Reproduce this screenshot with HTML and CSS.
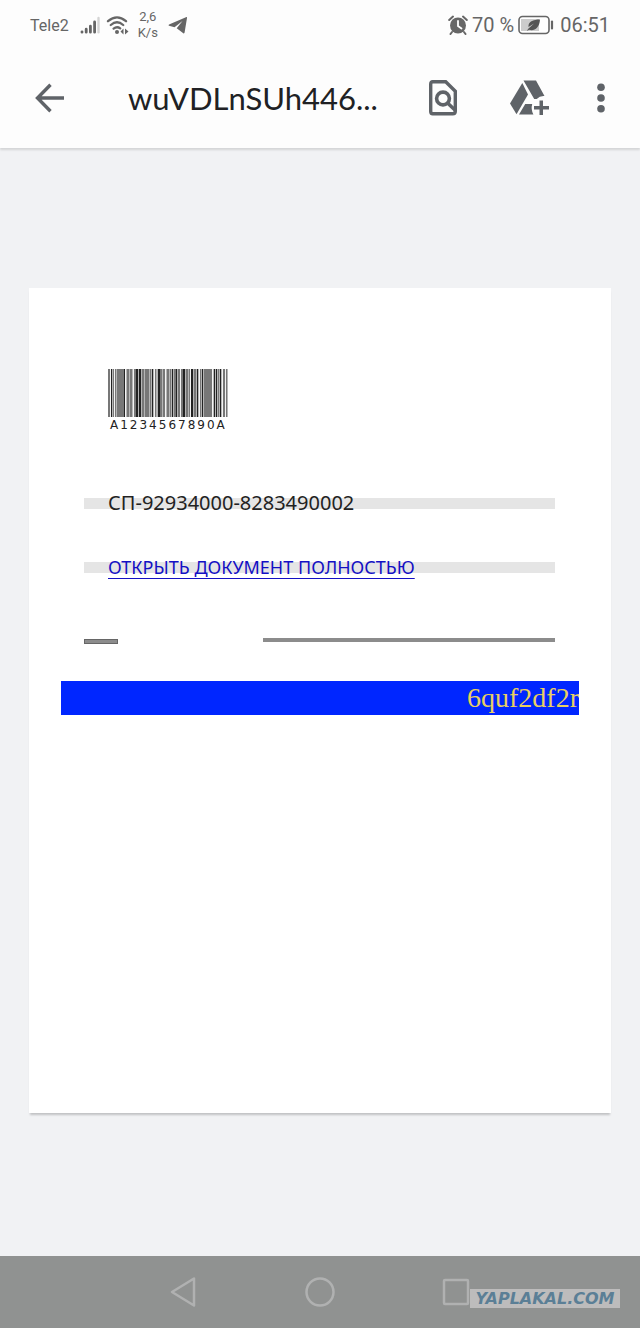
FILE: index.html
```html
<!DOCTYPE html>
<html lang="ru">
  <head>
    <title>wuVDLnSUh446</title>
    <meta charset="UTF-8" />
    <meta name="viewport" content="width=device-width, initial-scale=1" />
    <link rel="stylesheet" href="styles.css">
  </head>

  <body>
    <div class="statusBar">
      <div class="statusGroup">
        <span class="carrier">Tele2</span>
        <svg class="signal" width="20" height="20" viewBox="0 0 20 20">
          <g stroke="#666" stroke-width="2.8" stroke-linecap="round">
            <path d="M2 17.2v-.4M6.200 17.200v-3M10.400 17.200v-6M14.600 17.200V7" />
            <path d="M18.500 17.200V3" stroke="#d4d4d4" stroke-width="2.400" />
          </g>
        </svg>
        <svg class="wifi" width="24" height="20" viewBox="0 0 24 20">
          <g fill="none" stroke="#666" stroke-width="2.300" stroke-linecap="round">
            <path d="M2 6.200Q11 -1.500 20 6.200M4.800 10Q11 4.600 17.200 10M7.600 13.600Q11 11 14.200 13.400" />
          </g>
          <circle cx="11" cy="17" r="2" fill="#666" />
          <path d="M17.500 13.500v6l-3-3zM19 13.500v6l3.500-3z" fill="#666" />
        </svg>
        <span class="speed">2,6<br>K/s</span>
        <svg class="plane" width="20" height="20" viewBox="0 0 20 20">
          <path d="M18.500 2 1 9.500q-1 .7 0 1.200l5.500 1.500L14.500 6l-5.800 7.200 6.600 5q1 .6 1.300-.6L19 3q.2-1.200-.5-1z" fill="#666" />
        </svg>
      </div>
      <div class="statusGroup">
        <svg class="alarm" width="20" height="20" viewBox="0 0 20 20">
          <circle cx="10" cy="10.500" r="8" fill="#666" />
          <path d="M1.200 5 5 1.600M18.800 5 15 1.600M4 17l-1.500 2M16 17l1.500 2" stroke="#666" stroke-width="2" stroke-linecap="round" />
          <path d="M10 6v5l3.500 2.500" fill="none" stroke="#fff" stroke-width="1.800" stroke-linecap="round" />
        </svg>
        <span class="statusText">70 %</span>
        <svg class="battery" width="36" height="20" viewBox="0 0 36 20">
          <rect x="1" y="1.500" width="30" height="17" rx="3.500" fill="#fff" stroke="#666" stroke-width="1.600" />
          <path d="M3 4h18v12H3z" fill="#ccc" />
          <path d="M22 4.500c-7 0-12 2-11.500 7.500l5.500-3.500-6 5.500-1 2 2-1.300c5 1.800 10.500-1.700 11-10.200z" fill="#555" />
          <path d="M34 6.500v7" stroke="#666" stroke-width="2.200" stroke-linecap="round" />
        </svg>
        <span class="statusText">06:51</span>
      </div>
    </div>

    <header class="appBar">
      <button class="iconButton back" aria-label="Назад">
        <svg width="40" height="40" viewBox="0 0 40 40">
          <path d="M34 20H8M20.500 6.700 7.500 20l13 13.300" fill="none" stroke="#5f6368" stroke-width="3.400" />
        </svg>
      </button>
      <h1 class="title">wuVDLnSUh446...</h1>
      <div class="actions">
        <button class="iconButton" aria-label="Найти в документе">
          <svg width="40" height="40" viewBox="0 0 40 40">
            <path d="M9.700 3.700h13l9.600 9.500v20q0 2.500-2.500 2.500H9.700q-2 0-2-2.500V6.200q0-2.500 2-2.500z" fill="none" stroke="#5f6368" stroke-width="3.400" />
            <circle cx="20" cy="20.500" r="6.400" fill="none" stroke="#5f6368" stroke-width="3.600" />
            <path d="m24 24.500 8.500 8" stroke="#5f6368" stroke-width="3.600" />
          </svg>
        </button>
        <button class="iconButton" aria-label="Добавить на Диск">
          <svg width="40" height="40" viewBox="0 0 40 40">
            <g fill="#5f6368">
              <path d="M12.300 5 18 16.500 6.500 36.300 0 25.500z" />
              <path d="M13.500 2.500H26L34.500 18q-4.500-.5-7.800 3L24.200 21z" />
              <path d="M15.200 26h7q-1.500 5.500 1.200 10.500H9z" />
              <path d="M29.500 22.500H33V28h6v3.500h-6V37h-3.500v-5.500H24V28h5.500z" />
            </g>
          </svg>
        </button>
        <button class="iconButton" aria-label="Ещё">
          <svg width="8" height="40" viewBox="0 0 8 40">
            <g fill="#5f6368">
              <circle cx="4" cy="9.300" r="3.800" />
              <circle cx="4" cy="20" r="3.800" />
              <circle cx="4" cy="30.700" r="3.800" />
            </g>
          </svg>
        </button>
      </div>
    </header>

    <main class="viewer">
      <article class="paper">
        <figure class="barcode">
          <svg width="120" height="48" viewBox="0 0 120 48" fill="none">
            <path d="M0 24h120" stroke="#b5b5b5" stroke-width="48" />
            <g stroke-width="48" stroke="#777">
              <path d="M0 24h2M5 24h1M7 24h1M9 24h7M19 24h2M22 24h2M26 24h2M34 24h2M37 24h4M42 24h1M47 24h1M52 24h2M55 24h2M59 24h2M62 24h1M66 24h2M70 24h2M73 24h2M78 24h2M81 24h1M86 24h2M92 24h1M96 24h8M110 24h1M115 24h2M118 24h1" />
            </g>
            <g stroke-width="48" stroke="#222">
              <path d="M3 24h1M16 24h1M28 24h2M31 24h2M44 24h1M50 24h2M64 24h1M68 24h1M75 24h2M83 24h2M89 24h1M94 24h1M106 24h1M108 24h1M112 24h1" />
            </g>
            <path d="M2 24h1M6 24h1M17 24h1M25 24h1M46 24h1M57 24h1M72 24h1M82 24h1M91 24h1M104 24h1M114 24h1M117 24h1" stroke="#f4f4f4" stroke-width="48" />
          </svg>
          <figcaption>A1234567890A</figcaption>
        </figure>

        <p class="row">СП-92934000-8283490002</p>
        <p class="row"><a href="#">ОТКРЫТЬ ДОКУМЕНТ ПОЛНОСТЬЮ</a></p>

        <div class="rules">
          <span class="shortRule"></span>
          <span class="longRule"></span>
        </div>

        <p class="code">6quf2df2r</p>
      </article>
    </main>

    <nav class="navBar">
      <button class="navButton" aria-label="Назад">
        <svg width="32" height="32" viewBox="0 0 32 32">
          <path d="M26 2.500v27L4 16z" />
        </svg>
      </button>
      <button class="navButton" aria-label="Домой">
        <svg width="32" height="32" viewBox="0 0 32 32">
          <circle cx="16" cy="16" r="13.500" />
        </svg>
      </button>
      <button class="navButton" aria-label="Недавние">
        <svg width="32" height="32" viewBox="0 0 32 32">
          <rect x="4" y="4" width="24" height="24" rx="1" />
        </svg>
      </button>
      <span class="watermark">YAPLAKAL.COM</span>
    </nav>
  </body>
</html>
```
FILE: styles.css
```css
* {
  box-sizing: border-box;
  margin: 0;
  padding: 0;
}

body {
  display: flex;
  flex-direction: column;
  min-height: 100vh;
  font-family: Roboto, sans-serif;
  background-color: #f1f2f4;
}

button {
  background: none;
  border: none;
  cursor: pointer;
}

svg {
  display: block;
}

.statusBar {
  display: flex;
  justify-content: space-between;
  height: 50px;
  padding: 0 30px;
  background-color: #fdfdfd;
  color: #666;
}

.statusGroup {
  display: flex;
  align-items: center;
}

.carrier {
  font-size: 16px;
  margin-right: 11px;
}

.wifi {
  margin: 0 8px 0 6px;
}

.speed {
  font-size: 13px;
  line-height: 16px;
  text-align: center;
  margin-right: 10px;
}

.alarm {
  margin-right: 4px;
}

.statusText {
  font-size: 20px;
}

.battery {
  margin: 0 6px 0 4px;
}

.appBar {
  display: flex;
  align-items: center;
  height: 98px;
  padding: 0 35px 2px 30px;
  background-color: #fdfdfd;
  box-shadow: 0 2px 2px rgba(0, 0, 0, 0.12);
}

.iconButton {
  flex: none;
}

.back {
  margin-right: 58px;
}

.title {
  flex: 1;
  white-space: nowrap;
  font-family: Lato, sans-serif;
  font-size: 31px;
  font-weight: 400;
  color: #202124;
}

.actions {
  display: flex;
  gap: 47px;
}

.viewer {
  flex: 1;
  padding: 140px 29px;
}

.paper {
  aspect-ratio: 582 / 825;
  padding: 81px 32px 0;
  background-color: #fff;
  box-shadow: 0 3px 2px -1px rgba(0, 0, 0, 0.2);
}

.barcode {
  width: 120px;
  margin: 0 0 54px 47px;
}

.barcode figcaption {
  padding-left: 2px;
  font-family: "DejaVu Sans", sans-serif;
  font-size: 12px;
  line-height: 16px;
  letter-spacing: 2px;
  white-space: nowrap;
  color: #222;
}

.row {
  height: 32px;
  margin: 0 24px 32px 23px;
  padding-left: 24px;
  font-family: "Noto Sans", sans-serif;
  font-size: 20px;
  line-height: 32px;
  white-space: nowrap;
  color: #222;
  background: linear-gradient(#e5e5e5, #e5e5e5) center / 100% 11px no-repeat;
}

.row a {
  font-size: 18px;
  color: #1410c4;
  text-decoration-thickness: 1px;
  text-underline-offset: 4px;
}

.rules {
  display: flex;
  justify-content: space-between;
  margin: 0 24px 0 23px;
  padding-top: 23px;
}

.shortRule {
  width: 34px;
  height: 5px;
  margin-top: 1px;
  background-color: #8c8c8c;
  border: 1px solid #666;
}

.longRule {
  width: 62%;
  height: 4px;
  background-color: #8c8c8c;
}

.code {
  height: 34px;
  margin-top: 37px;
  font-family: "Liberation Serif", serif;
  font-size: 28px;
  line-height: 34px;
  text-align: right;
  color: #e8cf62;
  background-color: #0026ff;
}

.navBar {
  position: relative;
  display: flex;
  justify-content: center;
  align-items: center;
  gap: 104px;
  height: 72px;
  background-color: #909291;
}

.navButton svg {
  fill: none;
  stroke: #b0b1b1;
  stroke-width: 2.5;
  stroke-linejoin: round;
}

.watermark {
  position: absolute;
  right: 20px;
  bottom: 20px;
  width: 150px;
  height: 19px;
  font-family: "DejaVu Sans", sans-serif;
  font-size: 16px;
  font-weight: bold;
  font-style: italic;
  line-height: 19px;
  text-align: center;
  color: #5b7f96;
  background-color: #bdbcbc;
}
```
